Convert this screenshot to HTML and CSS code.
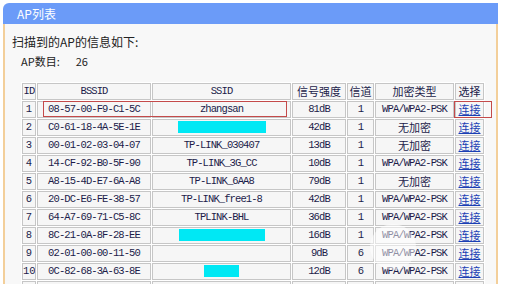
FILE: index.html
```html
<!DOCTYPE html>
<html lang="zh-CN">
<head>
    <meta charset="UTF-8">
    <title>AP列表</title>
    <link rel="stylesheet" href="styles.css">
</head>
<body>
    <div class="panel">
        <div class="panel-title">AP列表</div>
        <div class="panel-body">
            <p class="intro">扫描到的AP的信息如下:</p>
            <p class="count"><span>AP数目:</span><span class="count-num">26</span></p>

            <div class="table-wrap">
                <table class="ap-table">
                    <thead>
                        <tr>
                            <th class="c-id">ID</th>
                            <th class="c-bssid">BSSID</th>
                            <th class="c-ssid">SSID</th>
                            <th class="c-sig cn">信号强度</th>
                            <th class="c-ch cn">信道</th>
                            <th class="c-enc cn">加密类型</th>
                            <th class="c-sel cn">选择</th>
                        </tr>
                    </thead>
                    <tbody>
                        <tr><td>1</td><td>08-57-00-F9-C1-5C</td><td class="ssid-name">zhangsan</td><td>81dB</td><td>1</td><td>WPA/WPA2-PSK</td><td class="cn"><a href="#">连接</a></td></tr>
                        <tr><td>2</td><td>C0-61-18-4A-5E-1E</td><td><span class="mask" style="width:88px"></span></td><td>42dB</td><td>1</td><td class="cn">无加密</td><td class="cn"><a href="#">连接</a></td></tr>
                        <tr><td>3</td><td>00-01-02-03-04-07</td><td>TP-LINK_030407</td><td>13dB</td><td>1</td><td class="cn">无加密</td><td class="cn"><a href="#">连接</a></td></tr>
                        <tr><td>4</td><td>14-CF-92-B0-5F-90</td><td>TP-LINK_3G_CC</td><td>10dB</td><td>1</td><td>WPA/WPA2-PSK</td><td class="cn"><a href="#">连接</a></td></tr>
                        <tr><td>5</td><td>A8-15-4D-E7-6A-A8</td><td>TP-LINK_6AA8</td><td>79dB</td><td>1</td><td class="cn">无加密</td><td class="cn"><a href="#">连接</a></td></tr>
                        <tr><td>6</td><td>20-DC-E6-FE-38-57</td><td>TP-LINK_free1-8</td><td>42dB</td><td>1</td><td>WPA/WPA2-PSK</td><td class="cn"><a href="#">连接</a></td></tr>
                        <tr><td>7</td><td>64-A7-69-71-C5-8C</td><td>TPLINK-BHL</td><td>36dB</td><td>1</td><td>WPA/WPA2-PSK</td><td class="cn"><a href="#">连接</a></td></tr>
                        <tr><td>8</td><td>8C-21-0A-8F-28-EE</td><td><span class="mask" style="width:86px"></span></td><td>16dB</td><td>1</td><td>WPA/WPA2-PSK</td><td class="cn"><a href="#">连接</a></td></tr>
                        <tr><td>9</td><td>02-01-00-00-11-50</td><td></td><td>9dB</td><td>6</td><td>WPA/WPA2-PSK</td><td class="cn"><a href="#">连接</a></td></tr>
                        <tr><td>10</td><td>0C-82-68-3A-63-8E</td><td><span class="mask" style="width:35px"></span></td><td>12dB</td><td>6</td><td>WPA/WPA2-PSK</td><td class="cn"><a href="#">连接</a></td></tr>
                        <tr><td></td><td></td><td></td><td></td><td></td><td></td><td></td></tr>
                    </tbody>
                </table>

                <!-- 标注框 -->
                <div class="mark mark-ap"></div>
                <div class="mark mark-link"></div>
                <div class="watermark"></div>
            </div>
        </div>
    </div>
</body>
</html>
```

FILE: styles.css
```css
body {
    margin: 0;
    background-color: #ffffff;
    font-family: "Noto Sans CJK SC", "Liberation Sans", sans-serif;
    overflow: hidden;
}
.panel {
    width: 495px;
    margin: 3px 0 0 3px;
}
.panel-title {
    height: 21px;
    line-height: 21px;
    padding-left: 14px;
    background-color: #6b9bf8;
    border-top-left-radius: 6px;
    color: #ffffff;
    font-size: 12px;
}
.panel-body {
    background-color: #f8f8f8;
    border-left: 2px solid #f3cf9a;
    border-right: 2px solid #f3cf9a;
    height: 300px;
}
.intro {
    margin: 0;
    padding: 11px 0 0 7px;
    font-size: 12px;
    line-height: 14px;
    color: #222222;
}
.count {
    margin: 5px 0 0 16px;
    font-size: 11px;
    line-height: 14px;
    color: #222222;
}
.count-num {
    margin-left: 16px;
}
.table-wrap {
    position: relative;
    margin: 14px 0 0 16px;
}
.ap-table {
    table-layout: fixed;
    width: 464px;
    border-collapse: separate;
    border-spacing: 1px;
    background-color: #ffffff;
    font-family: "Liberation Mono", "Noto Sans CJK SC", monospace;
    font-size: 10.5px;
    letter-spacing: -0.9px;
    color: #1c1c4a;
}
.ap-table th,
.ap-table td {
    box-sizing: border-box;
    height: 17px;
    padding: 0;
    border: 1px solid #c6c6c6;
    background-color: #f6f6f6;
    text-align: center;
    font-weight: normal;
    white-space: nowrap;
    overflow: hidden;
    line-height: 15px;
}
.ap-table td:first-child {
    letter-spacing: 0;
}
.ap-table .cn {
    font-family: "Noto Sans CJK SC", sans-serif;
    font-size: 11px;
    letter-spacing: 0;
}
.c-id { width: 14px; }
.c-bssid { width: 114px; }
.c-ssid { width: 139px; }
.c-sig { width: 54px; }
.c-ch { width: 27px; }
.c-enc { width: 79px; }
.c-sel { width: 29px; }
.ssid-name {
    font-weight: bold;
}
.ap-table a {
    color: #1a3fb4;
    text-decoration: underline;
}
.mask {
    display: inline-block;
    height: 12px;
    vertical-align: middle;
    background-color: #00e8f4;
}
.mark {
    position: absolute;
    border: 1px solid #c44a4a;
}
.mark-ap {
    left: 22px;
    top: 19px;
    width: 242px;
    height: 14px;
}
.mark-link {
    left: 433px;
    top: 19px;
    width: 36px;
    height: 15px;
}
.watermark {
    position: absolute;
    left: 349px;
    top: 142px;
    width: 46px;
    height: 46px;
    border-radius: 50%;
    background-color: #ffffff;
    opacity: 0.5;
}
```
